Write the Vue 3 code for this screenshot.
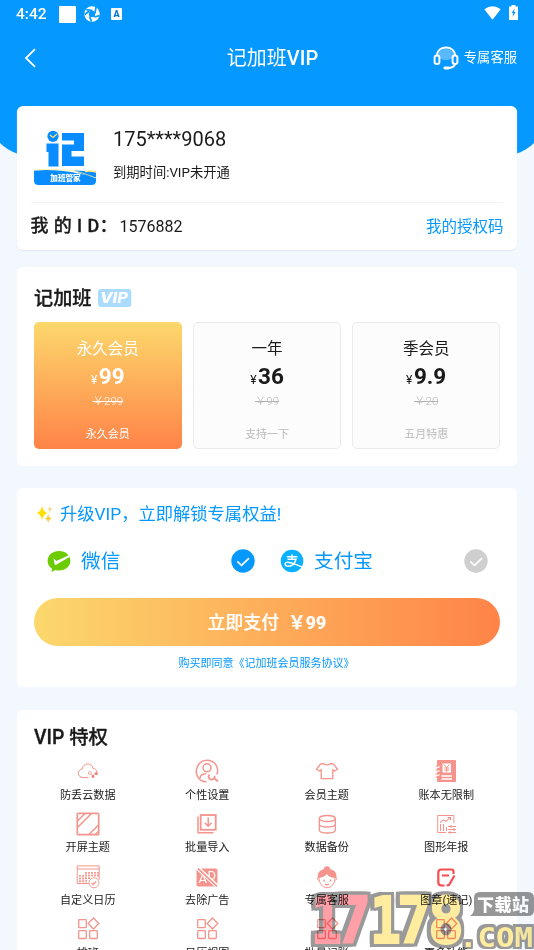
<script setup>
const plans = [
  { name: '永久会员', price: '99', old: '299', note: '永久会员', active: true },
  { name: '一年', price: '36', old: '99', note: '支持一下' },
  { name: '季会员', price: '9.9', old: '20', note: '五月特惠' },
]
const perks = [
  { icon: 'cloud', label: '防丢云数据' },
  { icon: 'person', label: '个性设置' },
  { icon: 'shirt', label: '会员主题' },
  { icon: 'book', label: '账本无限制' },
  { icon: 'screen', label: '开屏主题' },
  { icon: 'import', label: '批量导入' },
  { icon: 'database', label: '数据备份' },
  { icon: 'chart', label: '图形年报' },
  { icon: 'calendar', label: '自定义日历' },
  { icon: 'ad', label: '去除广告' },
  { icon: 'service', label: '专属客服' },
  { icon: 'stamp', label: '图章(速记)' },
  { icon: 'grid', label: '排班' },
  { icon: 'grid', label: '日历视图' },
  { icon: 'grid', label: '批量记账' },
  { icon: 'grid', label: '更多功能' },
]
</script>

<template>
  <div class="page">
    <header class="hero">
      <div class="status">
        <span class="time">4:42</span>
        <i class="block"></i>
        <svg class="aperture" width="16" height="16" viewBox="0 0 16 16">
          <circle cx="8" cy="8" r="7.7" fill="#fff" />
          <circle cx="8" cy="8" r="3.2" fill="#0598ff" />
          <path d="M2.200 3.600 8.500 4.600M12 1.200 11 7.300M15.500 9.600 10.300 11M7.500 15.500 5.500 10.500M.8 8.500 5.200 5" fill="none" stroke="#0598ff" stroke-width="1.700" />
        </svg>
        <svg class="letter" width="11" height="12" viewBox="0 0 11 12">
          <rect width="11" height="12" rx="1" fill="#fff" />
          <text x="5.5" y="9.2" text-anchor="middle" font-size="9" font-weight="900" fill="#0878cf" font-family="Roboto, sans-serif">A</text>
        </svg>
        <span class="grow"></span>
        <svg class="wifi" width="17" height="14" viewBox="0 0 17 14"><path d="M.3 3.3Q8.5-2.6 16.7 3.3L8.5 13.7Z" fill="#fff" /></svg>
        <svg class="battery" width="9" height="15" viewBox="0 0 9 15">
          <path d="M2.5 0h4v1.4H9V15H0V1.4h2.5z" fill="#fff" />
          <path d="M5.8 3.5 2.5 8h1.7l-.7 4 3.2-5H5z" fill="#0598ff" />
        </svg>
      </div>
      <div class="nav">
        <svg class="back" width="12" height="20" viewBox="0 0 12 20"><path d="M11 1.200 2 10l9 8.800" fill="none" stroke="#fff" stroke-width="1.800" /></svg>
        <h1>记加班<b>VIP</b></h1>
        <div class="support">
          <svg width="26" height="24" viewBox="0 0 26 24" fill="none" stroke="#fff" stroke-width="2">
            <ellipse cx="13" cy="8.5" rx="8" ry="5.8" fill="#59b9ff" stroke="none" />
            <path d="M3.7 10C4 4.5 8 1.4 13 1.4S22 4.5 22.3 10" />
            <rect x="1.6" y="9.5" width="4.8" height="8.5" rx="2.3" />
            <rect x="19.6" y="9.5" width="4.8" height="8.5" rx="2.3" />
            <path d="M22 18.5q-1.7 3.3-7 3.5" />
            <path d="M11.8 22h3.6" stroke-width="2.8" stroke-linecap="round" />
          </svg>
          <span>专属客服</span>
        </div>
      </div>
    </header>

    <section class="card account">
      <div class="profile">
        <svg class="logo" width="62" height="56" viewBox="0 0 62 56">
          <g fill="#088cff">
            <circle cx="19" cy="6.3" r="5.6" />
            <path d="M12.500 13.500H24.500V36.500H14.500V22H12.500zM28 3H50V21H37.500V26.500H50V36H28V14.500H40V10.500H28z" />
            <path d="M0 40.500Q31 38 62 48v2.500q0 4.500-4.500 4.500h-53Q0 55 0 50.500z" />
            <path d="M40 40.500H62v7Q52 46 40 40.500z" />
          </g>
          <path d="m16 5 3 2.500 4-3.500" stroke="#ffe56d" stroke-width="1.200" fill="none" />
          <path d="M0 40q17-1.500 30 0 14 0 32 8" stroke="#ffe980" stroke-width=".7" fill="none" />
          <path d="M26 39.800q9-2.500 19 .8l17 1V38H26z" fill="#fff" />
          <path d="M51 41.500q5-1 11 .5" stroke="#ffe980" stroke-width="1.500" fill="none" />
          <text x="31.500" y="50.700" text-anchor="middle" font-family="Noto Sans CJK SC, sans-serif" font-size="7.600" font-weight="900" fill="#fff">加班管家</text>
        </svg>
        <div class="who">
          <div class="phone">175****9068</div>
          <div class="expire">到期时间:VIP未开通</div>
        </div>
      </div>
      <div class="id-row">
        <span class="id-label">我 的 I D：</span>
        <span class="id-value">1576882</span>
        <a class="code">我的授权码</a>
      </div>
    </section>

    <section class="card plans-card">
      <h2 class="plans-title">
        <span>记加班</span>
        <svg width="34" height="18" viewBox="0 0 34 18">
          <rect width="33.300" height="18" rx="3" fill="#abdcff" />
          <text x="2" y="14" textLength="28" lengthAdjust="spacingAndGlyphs" font-family="Inter, sans-serif" font-size="14.500" font-weight="800" font-style="italic" fill="#fff">VIP</text>
        </svg>
      </h2>
      <div class="plans">
        <div v-for="p in plans" :key="p.name" class="plan" :class="{ active: p.active }">
          <div class="plan-name">{{ p.name }}</div>
          <div class="plan-price"><small>¥</small>{{ p.price }}</div>
          <div class="plan-old">￥{{ p.old }}</div>
          <div class="plan-note">{{ p.note }}</div>
        </div>
      </div>
    </section>

    <section class="card pay">
      <div class="pay-title">
        <svg width="18" height="20" viewBox="0 0 18 20">
          <path d="M6 1.500Q7 8 12 9 7 10 6 16.500 5 10 .5 9 5 8 6 1.500z" fill="#ffdf00" />
          <path d="M12.200 10q.7 4 4 4.500-3.300.8-4 4.500-.8-3.700-3.500-4.500 2.700-.5 3.500-4.500z" fill="#f5cf4b" />
          <path d="M13.800 2q.5 2.800 3 3.300-2.500.6-3 3.200-.5-2.600-2.800-3.200 2.300-.5 2.800-3.300z" fill="#f3dea0" />
        </svg>
        <span>升级VIP，立即解锁专属权益!</span>
      </div>
      <div class="methods">
        <div class="method">
          <svg width="24" height="24" viewBox="0 0 24 24">
            <path d="M12 2C5.500 2 .6 6.300.6 12c0 3.300 1.700 6 4.500 7.800L4.500 23l3.800-2c1.200.4 2.400.6 3.700.6 6.400 0 11.400-4.200 11.400-9.800S18.400 2 12 2z" fill="#6bcc03" />
            <path d="m6.400 9.300 3 2.700L21.700 6.200 22.800 7.700 9.200 15.800q-1 .6-1.500-.5z" fill="#fff" />
          </svg>
          <span>微信</span>
          <svg class="check" width="24" height="24" viewBox="0 0 24 24"><circle cx="12" cy="12" r="11.700" fill="#0598ff" /><path d="m6.800 12.800 3.700 3.600 7-6.700" fill="none" stroke="#fff" stroke-width="1.700" stroke-linecap="round" stroke-linejoin="round" /></svg>
        </div>
        <div class="method">
          <svg width="24" height="24" viewBox="0 0 24 24">
            <circle cx="12" cy="12" r="11.300" fill="#08b0ff" />
            <path d="M6.700 7.700h10.800M12 5.200v5M7.500 10.200h8.500c-1 3.500-3.600 7-7.500 7-4.500 0-4.300-4-.8-4 3.500 0 8.100 2.700 14.600 4.700" fill="none" stroke="#fff" stroke-width="1.400" />
          </svg>
          <span>支付宝</span>
          <svg class="check" width="24" height="24" viewBox="0 0 24 24"><circle cx="12" cy="12" r="11.700" fill="#cfcfcf" /><path d="m6.800 12.800 3.700 3.600 7-6.700" fill="none" stroke="#fff" stroke-width="1.700" stroke-linecap="round" stroke-linejoin="round" /></svg>
        </div>
      </div>
      <button class="pay-btn"><span>立即支付</span><b>￥99</b></button>
      <div class="agree">购买即同意《记加班会员服务协议》</div>
    </section>

    <section class="card perks-card">
      <h2 class="perks-title">VIP 特权</h2>
      <div class="perks">
        <div v-for="(k, i) in perks" :key="i" class="perk">
          <svg width="24" height="24" viewBox="0 0 24 24" fill="none" stroke="#f4948c" stroke-width="1.300">
            <template v-if="k.icon === 'cloud'">
              <path d="M12.500 18.500H7c-6 0-6.200-7.500-.8-8.500C7 3.200 16 3.600 17 9.300c2.700.4 4 2 4.100 4" stroke-width="1" />
              <circle cx="13.800" cy="14" r="1.500" stroke-width=".8" />
              <path d="m15 15 1.500 2 3-3" stroke-width=".8" />
              <g fill="#f27f78" stroke="none"><circle cx="20.300" cy="14.500" r="1.600" /><circle cx="17" cy="17.500" r="1.400" /></g>
            </template>
            <template v-else-if="k.icon === 'person'">
              <path d="M8 22.500C-3 18 .5 1.200 12 1.200c8 0 12.500 7.800 9.800 14.300" stroke-width="1.500" />
              <circle cx="12" cy="8.800" r="4" stroke-width="1.500" />
              <path d="M5 19.500c0-3 2.700-5 6-4.500M8 22.300l3.500.8" stroke-width="1.500" />
              <path d="M14.500 15.500a3 3 0 1 0 5 1.200M19.500 19.500l3.500 3" stroke-width="1.700" />
            </template>
            <template v-else-if="k.icon === 'shirt'">
              <path d="M8.500 4.500q3.500 2.700 7 0l3 .7 4 4.800-3 2-1.700-1.300v9H6.200v-9L4.500 12l-3-2 4-4.800z" />
            </template>
            <template v-else-if="k.icon === 'book'">
              <rect x="3" y="1" width="19" height="22" rx="1" fill="#f4948c" stroke="none" />
              <rect x="8.500" y="4.500" width="8.500" height="9" fill="#fff" stroke="none" />
              <path d="m10 5.500 2.700 3 2.700-3M10.300 9h5M10.300 11h5M12.700 8.500v4.500" stroke-width="1" />
              <path d="M7.500 17h10.500M7.500 20h10.500M1.500 8h4M1.500 12h4M1.500 16h4" stroke="#fff" />
              <path d="M1.500 7h3M1.500 11h3M1.500 15h3M1.500 18h3" stroke-width="1" />
            </template>
            <template v-else-if="k.icon === 'screen'">
              <rect x="1.300" y="1.300" width="21.400" height="21.400" rx="1" stroke-width="1.700" />
              <path d="M1.500 9 9 1.500M2 15 15.500 1.500M13 22.500l9.500-9.500M19 22.500l3.500-3" stroke-width="1.500" />
            </template>
            <template v-else-if="k.icon === 'import'">
              <rect x="5.700" y="3" width="15" height="14.800" stroke-width="1.800" />
              <path d="M3 4.500v16.200h15.500" stroke-width="1.500" />
              <path d="M13.200 5.500v8.500M9.700 10.800l3.500 3.500 3.500-3.500" stroke-width="1.500" />
            </template>
            <template v-else-if="k.icon === 'database'">
              <ellipse cx="12.300" cy="6.500" rx="8" ry="3" />
              <path d="M4.300 6.500v11.500c0 4 16 4 16 0V6.500M4.300 12c0 4 16 4 16 0" />
            </template>
            <template v-else-if="k.icon === 'chart'">
              <path d="M12 20.500H3.700V3.500h16.200v8" stroke-width="1" />
              <path d="m6 10.500 3.500-2.700 2.500 1.500 4.500-4M13.500 5.500h3v2.500M6.500 12v7M9.500 12v7M12.500 15v4" stroke-width="1.100" />
              <path d="M14 14.500h8M14 17.500h8M14 20.500h8M17 13v3M20 16v3M16 19v3" stroke-width="1" />
            </template>
            <template v-else-if="k.icon === 'calendar'">
              <path d="M13 18.500H1.200V.9h22v14M1.200 4h22" stroke-width="1" />
              <g stroke-width="1.800" stroke-dasharray="1.800 .8"><path d="M4 10v8M7 10v8M10 7v11M13 7v7M16 7v5M19 7v5M22 7v5" /></g>
              <circle cx="18" cy="17.800" r="5" fill="#fff" stroke-width=".9" />
              <path d="m15.500 18 1.700 1.500 3-3" />
            </template>
            <template v-else-if="k.icon === 'ad'">
              <rect x="1.500" y="3.500" width="21" height="18" rx="2" fill="#f4948c" stroke="none" />
              <text x="3.500" y="18" font-family="Roboto, sans-serif" font-size="13" fill="#fff" stroke="none">A</text>
              <text x="12.500" y="15" font-family="Roboto, sans-serif" font-size="13" fill="#fff" stroke="none">D</text>
              <path d="m2 2.500 20.500 19" stroke="#fff" stroke-width="4" /><path d="m3 3.700 19 17.600" stroke-width="1.700" />
            </template>
            <template v-else-if="k.icon === 'service'">
              <path d="M3 13C2 7 5.500 5 9 4.200 8 .2 16 .2 15 4.200c4 .8 7.500 3 6.200 8.800q-7 0-9.500-4-2 3.500-8.700 4z" fill="#f4948c" stroke="none" />
              <path d="M4 12.500c0 6 3.500 10.200 8 10.200s8-4.200 8-10.200M3.500 11.500q-2.500 2 0 4M20.500 11.500q2.500 2 0 4" stroke-width="1" />
              <path d="M9 14.500v2M15.500 14.500v2M10 19q2 1.500 4 0" stroke-width="1.500" />
            </template>
            <template v-else-if="k.icon === 'stamp'">
              <g stroke="#f54e50" stroke-width="2.200"><path d="M19.500 9V6.500q0-2-2-2h-10q-3.200 0-3.200 3.200v9.600q0 3.200 3.200 3.200h3M8 10.500h7" /><path d="m12.500 20.500 2.500-.5 5.500-9.500" /></g>
            </template>
            <template v-else>
              <rect x="2.700" y="2.700" width="7.600" height="8" rx=".7" /><path d="m17.500 1 5.300 5.500-5.300 5.500-5.300-5.500z" />
              <rect x="2.700" y="13.700" width="7.600" height="7.800" rx=".7" /><rect x="13.700" y="13.700" width="7.600" height="7.800" rx=".7" />
            </template>
          </svg>
          <span>{{ k.label }}</span>
        </div>
      </div>
    </section>

    <svg class="mark" width="230" height="64" viewBox="304 886 230 64" stroke-linejoin="miter">
      <g class="mark-text" font-family="DejaVu Sans Mono, monospace" font-weight="700" font-size="64">
        <g fill="#ffa0a8" stroke="#ffa0a8" stroke-width="2">
          <text x="311" y="943" textLength="31" lengthAdjust="spacingAndGlyphs">1</text>
          <text x="336" y="943" textLength="35" lengthAdjust="spacingAndGlyphs">7</text>
        </g>
        <g fill="#ffec9e" stroke="#ffec9e" stroke-width="2">
          <text x="370" y="943" textLength="31" lengthAdjust="spacingAndGlyphs">1</text>
          <text x="397" y="943" textLength="35" lengthAdjust="spacingAndGlyphs">7</text>
          <text x="428" y="943" textLength="36" lengthAdjust="spacingAndGlyphs">8</text>
        </g>
      </g>
      <text class="mark-com" x="459" y="946.500" textLength="74" lengthAdjust="spacingAndGlyphs" font-family="DejaVu Sans Mono, monospace" font-weight="700" font-size="26" fill="#ffec9e">.COM</text>
      <path d="M480 892h48q6 0 6 6v12q0 6-6 6h-58q5-4 4-9v-9q0-6 6-6z" fill="#979797" />
      <text x="477" y="910.500" textLength="52" font-family="Noto Sans CJK SC, sans-serif" font-size="17" font-weight="900" fill="#fff">下载站</text>
    </svg>
  </div>
</template>

<style>
body { margin: 0; overflow: hidden; }
</style>

<style scoped>
.page { position: relative; width: 534px; height: 950px; overflow: hidden; background: #f3f8ff; color: #1a1a1a; font-family: Roboto, "Noto Sans CJK SC", sans-serif; }
.hero { height: 160px; background: #0598ff; color: #fff; clip-path: path("M0 0H534V143Q527 150 517 153.500L500 160H34L17 153.500Q7 150 0 143Z"); }
.status { display: flex; align-items: center; height: 28px; padding: 0 15px 0 16px; }
.time { width: 43px; font-size: 15.500px; font-weight: 500; line-height: 28px; }
.block { width: 17px; height: 17px; border-radius: 1px; background: #fff; }
.aperture { margin-left: 8px; }
.letter { margin-left: 11px; }
.grow { flex: 1; }
.wifi { margin: 0 8px 2px 0; }
.battery { margin: 0 1px 3px 0; }
.nav { display: grid; grid-template-columns: 1fr auto 1fr; align-items: center; height: 60px; padding: 0 17px 0 24px; }
.nav h1 { margin: 0 0 0 4px; font-size: 20px; font-weight: 400; line-height: 30px; }
.nav b { font-weight: 500; }
.support { display: flex; align-items: center; justify-content: flex-end; gap: 5px; font-size: 13.300px; line-height: 20px; }
.support span { padding-bottom: 1px; }
.card { box-sizing: border-box; width: 500px; margin: 0 17px; border-radius: 6px; background: #fff; }
.account { position: relative; height: 144px; margin-top: -54px; box-shadow: 0 1px 1px #dfe7f5; }
.profile { display: flex; height: 96px; margin: 0 14px; border-bottom: 1px solid #f3f3f3; }
.logo { margin: 24px 0 0 3px; }
.who { margin: 18px 0 0 17px; }
.phone { font-size: 20px; line-height: 31px; }
.expire { margin-top: 7px; font-size: 13.300px; line-height: 22px; }
.id-row { display: flex; align-items: center; height: 45px; padding: 0 13.500px; }
.id-label { width: 89px; font-size: 18px; font-weight: 500; line-height: 26px; -webkit-text-stroke: .3px; letter-spacing: .4px; white-space: nowrap; }
.id-value { padding-top: 2px; font-size: 16px; }
.code { margin-left: auto; padding-bottom: 1px; font-size: 15.500px; color: #0598ff; }
.plans-card { height: 199px; margin-top: 17px; padding: 15px 17px 0; }
.plans-title { display: flex; align-items: center; gap: 6px; height: 29px; margin: 0 0 11px; font-size: 19.200px; font-weight: 500; -webkit-text-stroke: .3px; }
.plans-title svg { margin-top: 2px; -webkit-text-stroke: 0; }
.plans { display: grid; grid-template-columns: repeat(3, 1fr); gap: 11.500px; }
.plan { box-sizing: border-box; height: 127px; padding-top: 13px; border: 1px solid #ebebeb; border-radius: 5px; background: #fcfcfc; text-align: center; }
.plan-name { font-size: 15.500px; line-height: 26px; }
.plan-price { height: 30px; margin-top: -1px; font-size: 22.500px; font-weight: 700; line-height: 30px; }
.plan-price small { margin-right: 1.500px; font-size: 12px; font-weight: 400; -webkit-text-stroke: 0; }
.plan-old { height: 20px; font-size: 11.500px; font-weight: 300; line-height: 20px; color: #b5b5b5; text-decoration: line-through; }
.plan-note { margin-top: 14px; font-size: 11px; line-height: 20px; color: #bababa; }
.plan.active { border-color: transparent; background: linear-gradient(#fcd86c, #ff8348) border-box; color: #fff; }
.active .plan-old, .active .plan-note { color: #fff; }
.pay { height: 199px; margin-top: 22px; padding: 13px 17px 0; }
.pay-title { display: flex; align-items: center; gap: 6px; height: 26px; padding-left: 2px; font-size: 17.300px; line-height: 24px; color: #0598ff; }
.pay-title span { padding-bottom: 1px; }
.methods { display: grid; grid-template-columns: 1fr 1fr; height: 48px; margin-top: 11px; }
.method { display: flex; align-items: center; gap: 10.500px; padding: 0 12.500px 2px; font-size: 19.700px; color: #0598ff; }
.method span { padding-bottom: 3px; }
.method .check { margin-left: auto; }
.pay-btn { display: flex; align-items: center; justify-content: center; gap: 9px; width: 100%; height: 48px; margin-top: 12px; padding: 0 0 3px; border: 0; border-radius: 24px; background: linear-gradient(90deg, #fcd86c, #ff8348); color: #fff; font: 500 17.800px Roboto, "Noto Sans CJK SC", sans-serif; -webkit-text-stroke: .2px; }
.pay-btn b { font-weight: 700; }
.agree { margin-top: 8px; padding-right: 1px; font-size: 11px; line-height: 20px; text-align: center; color: #0598ff; }
.perks-card { height: 300px; margin-top: 23px; padding: 13px 11px 0; }
.perks-title { margin: 0 0 0 6px; font-size: 19.400px; font-weight: 500; line-height: 30px; -webkit-text-stroke: .3px; }
.perks { display: grid; grid-template-columns: repeat(4, 1fr); margin-top: 6px; }
.perk { display: flex; flex-direction: column; align-items: center; height: 52.800px; font-size: 11.100px; line-height: 20px; }
.perk span { margin-top: 2.500px; }
.mark { position: absolute; left: 304px; top: 886px; mix-blend-mode: multiply; }
.mark-text { filter: drop-shadow(3.500px 0 0 #999) drop-shadow(-3.500px 0 0 #999) drop-shadow(0 3px 0 #999) drop-shadow(0 -3px 0 #999); }
.mark-com { filter: drop-shadow(2.500px 0 0 #999) drop-shadow(-2.500px 0 0 #999) drop-shadow(0 2.500px 0 #999) drop-shadow(0 -2.500px 0 #999); }
</style>
